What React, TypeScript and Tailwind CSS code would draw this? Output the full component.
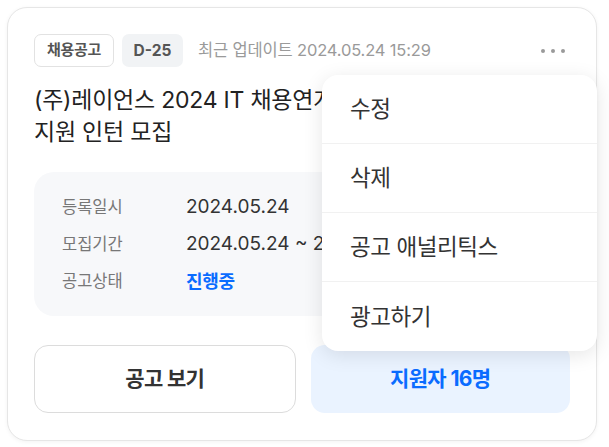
import React from "react";

const font = { fontFamily: 'Inter, "Noto Sans CJK KR", sans-serif' };

export default function App() {
  return (
    <div className="min-h-[447px] w-[609px] bg-white p-[7px]" style={font}>
      <div className="relative w-[590px] rounded-[20px] border border-[#e6e6e6] bg-white px-[26px] pb-[27px] pt-[26px] shadow-[0_1px_4px_rgba(0,0,0,0.05)]">
        {/* header */}
        <div className="flex h-[33px] items-center">
          <span className="flex h-[33px] w-[80px] items-center justify-center rounded-[7px] border border-[#e2e2e2] text-[15px] font-bold tracking-[-0.02em] text-[#555]">
            채용공고
          </span>
          <span className="ml-[8px] flex h-[33px] w-[61px] items-center justify-center rounded-[7px] bg-[#f1f3f5] text-[15.5px] font-bold text-[#555]">
            D-25
          </span>
          <span className="ml-[15px] text-[16.5px] tracking-[-0.01em] text-[#9a9a9a]">최근 업데이트 2024.05.24 15:29</span>
          <div className="ml-auto mr-[5px] flex items-center gap-[6px]">
            <span className="h-[4px] w-[4px] rounded-full bg-[#9a9a9a]" />
            <span className="h-[4px] w-[4px] rounded-full bg-[#9a9a9a]" />
            <span className="h-[4px] w-[4px] rounded-full bg-[#9a9a9a]" />
          </div>
        </div>

        {/* title */}
        <h1 className="mt-[17px] text-[23px] leading-[32px] tracking-[-0.01em] text-[#222]">
          (주)레이언스 2024 IT 채용연계형 SW
          <br />
          지원 인턴 모집
        </h1>

        {/* info box */}
        <div className="mt-[24px] rounded-[20px] bg-[#f7f8fa] px-[28px] pb-[22px] pt-[22px]">
          <div className="flex flex-col gap-[11px]">
            <div className="flex h-[26px] items-center">
              <span className="w-[124px] text-[16.5px] text-[#777]">등록일시</span>
              <span className="text-[19px] text-[#333]">2024.05.24</span>
            </div>
            <div className="flex h-[26px] items-center">
              <span className="w-[124px] text-[16.5px] text-[#777]">모집기간</span>
              <span className="text-[19px] text-[#333]">2024.05.24 ~ 2024.06.18</span>
            </div>
            <div className="flex h-[26px] items-center">
              <span className="w-[124px] text-[16.5px] text-[#777]">공고상태</span>
              <span className="text-[18px] font-bold tracking-[-0.02em] text-[#0a6cff]">진행중</span>
            </div>
          </div>
        </div>

        {/* buttons */}
        <div className="mt-[29px] flex gap-[15px]">
          <button className="flex h-[68px] flex-1 items-center justify-center rounded-[14px] border border-[#dcdcdc] bg-white text-[21px] font-bold tracking-[-0.03em] text-[#333]">
            공고 보기
          </button>
          <button className="flex h-[68px] flex-1 items-center justify-center rounded-[14px] bg-[#eaf3ff] text-[21px] font-bold tracking-[-0.03em] text-[#0a6cff]">
            지원자 16명
          </button>
        </div>

        {/* dropdown */}
        <div className="absolute right-[-1px] top-[67px] w-[275px] overflow-hidden rounded-[16px] bg-white shadow-[0_4px_20px_rgba(0,0,0,0.10)]">
          {["수정", "삭제", "공고 애널리틱스", "광고하기"].map((item, i) => (
            <div
              key={item}
              className={
                i < 3
                  ? "flex h-[69px] items-center border-b border-[#f1f1f1] pl-[28px] text-[22.5px] tracking-[-0.02em] text-[#333]"
                  : "flex h-[69px] items-center pl-[28px] text-[22.5px] tracking-[-0.02em] text-[#333]"
              }
            >
              {item}
            </div>
          ))}
        </div>
      </div>
    </div>
  );
}
